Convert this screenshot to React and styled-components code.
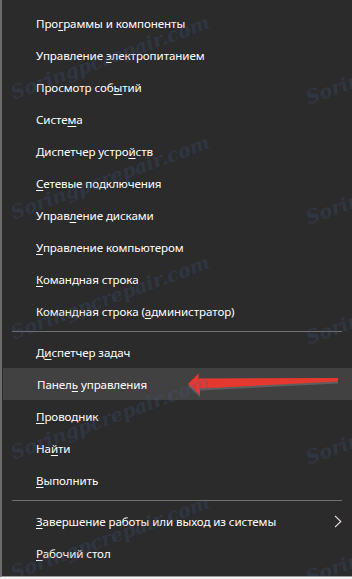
import React from "react";
import styled, { createGlobalStyle } from "styled-components";

const Global = createGlobalStyle`
  html, body { margin: 0; padding: 0; background: #f2f2f2; }
  body { font-family: "Noto Sans", "Open Sans", "DejaVu Sans", sans-serif; }
`;

const Menu = styled.div`
  position: relative;
  width: 350px;
  background: #2b2b2b;
  border-left: 2px solid #6c6c6c;
  border-bottom: 1px solid #9a9a9a;
  padding: 7px 0;
  display: flex;
  flex-direction: column;
  overflow: hidden;
`;

const Item = styled.div`
  position: relative;
  height: 32px;
  display: flex;
  align-items: center;
  padding: 0 10px 0 34px;
  margin-left: ${(p) => (p.$active ? "1px" : "0")};
  background: ${(p) => (p.$active ? "#414141" : "transparent")};
  color: #ffffff;
  font-size: 11.6px;
  letter-spacing: -0.1px;
  white-space: nowrap;
  u { text-decoration: underline; text-underline-offset: 2px; text-decoration-thickness: 1px; }
`;

const Label = styled.span`
  flex: 1;
`;

const Separator = styled.div`
  height: 9px;
  display: flex;
  align-items: center;
  padding: 0 10px;
  &::after {
    content: "";
    flex: 1;
    height: 1px;
    background: #707070;
  }
`;

const Chevron = styled.svg`
  width: 8px;
  height: 13px;
  flex: none;
`;

const Arrow = styled.svg`
  position: absolute;
  left: 180px;
  top: 2px;
  width: 158px;
  height: 28px;
  pointer-events: none;
`;

const Watermarks = styled.div`
  position: absolute;
  inset: 0;
  pointer-events: none;
  overflow: hidden;
`;

const Mark = styled.span`
  position: absolute;
  font-family: "DejaVu Serif", serif;
  font-style: italic;
  font-weight: bold;
  font-size: 19px;
  color: rgba(70, 92, 150, 0.24);
  transform: translate(-50%, -50%) rotate(-20deg);
  white-space: nowrap;
`;

const A = ({ text, k }) => (
  <>
    {text.slice(0, k)}
    <u>{text[k]}</u>
    {text.slice(k + 1)}
  </>
);

const group1 = [
  ["Программы и компоненты", 3],
  ["Управление электропитанием", 11],
  ["Просмотр событий", 12],
  ["Система", 5],
  ["Диспетчер устройств", 15],
  ["Сетевые подключения", 0],
  ["Управление дисками", 5],
  ["Управление компьютером", 0],
  ["Командная строка", 0],
  ["Командная строка (администратор)", 18],
];

const group2 = [
  ["Диспетчер задач", 1],
  ["Панель управления", 5, true],
  ["Проводник", 0],
  ["Найти", 2],
  ["Выполнить", 0],
];

const marks = [57, 177, 297, 417, 537];

export default function App() {
  return (
    <>
      <Global />
      <Menu>
        {group1.map(([t, k]) => (
          <Item key={t}>
            <Label><A text={t} k={k} /></Label>
          </Item>
        ))}
        <Separator />
        {group2.map(([t, k, active]) => (
          <Item key={t} $active={active}>
            <Label><A text={t} k={k} /></Label>
            {active && (
              <Arrow viewBox="0 0 158 28">
                <path
                  d="M5 14 L16 3 L15 8.5 L155 8 L155 11.5 L17 18.5 L17 25 Z"
                  fill="#5e5e5e"
                  transform="translate(0 2)"
                />
                <path
                  d="M5 14 L16 3 L15 8.5 L155 8 L155 11.5 L17 18.5 L17 25 Z"
                  fill="#e5392f"
                />
              </Arrow>
            )}
          </Item>
        ))}
        <Separator />
        <Item>
          <Label><A text="Завершение работы или выход из системы" k={0} /></Label>
          <Chevron viewBox="0 0 8 13">
            <path d="M1 0.8 L6.8 6.5 L1 12.2" fill="none" stroke="#f2e4e4" strokeWidth="1.1" />
          </Chevron>
        </Item>
        <Item>
          <Label><A text="Рабочий стол" k={0} /></Label>
        </Item>
        <Watermarks>
          {marks.map((y) => (
            <React.Fragment key={y}>
              <Mark style={{ left: 108, top: y }}>Soringpcrepair.com</Mark>
              <Mark style={{ left: 403, top: y + 5 }}>Soringpcrepair.com</Mark>
            </React.Fragment>
          ))}
        </Watermarks>
      </Menu>
    </>
  );
}
